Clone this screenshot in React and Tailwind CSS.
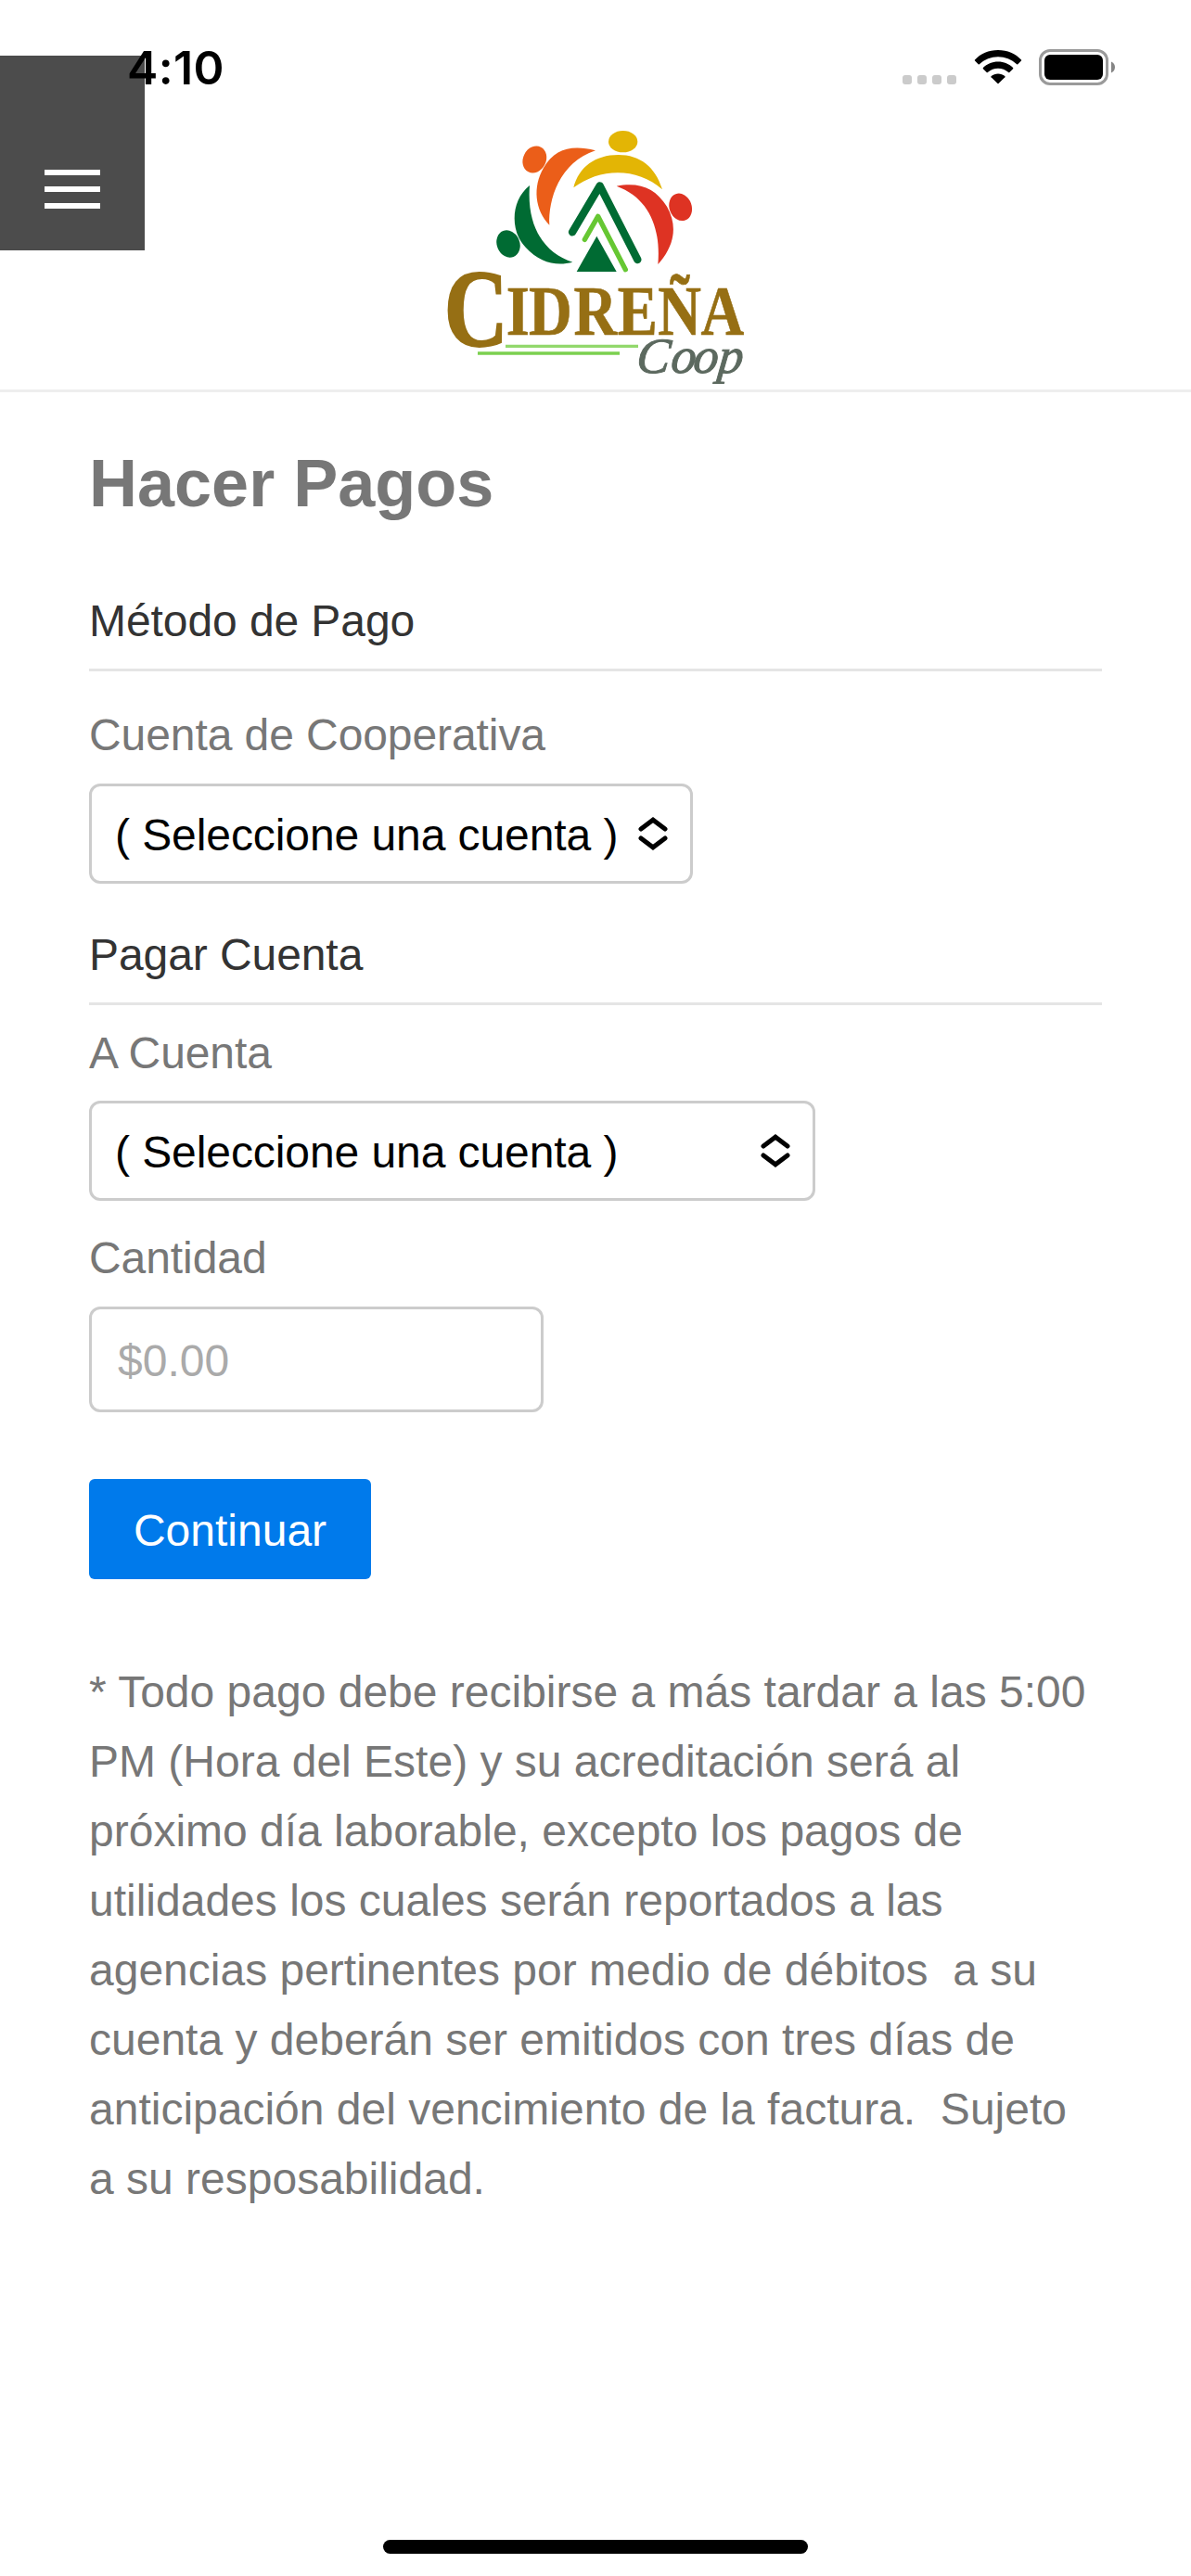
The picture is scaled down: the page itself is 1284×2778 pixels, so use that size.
import { useState } from "react";

function StatusBar() {
  return <div className="absolute inset-x-0 top-0 flex h-[141px] items-start justify-between pl-[137px] pr-[81px]">
      <span className="mt-[43px] font-['Inter'] text-[50px] leading-[60px] font-semibold tracking-[0.4px] text-black">4:10</span>
      <div className="mt-[53px] flex items-end">
        <div className="mb-px flex gap-1.5">
          {[0, 1, 2, 3].map((dot) => <span key={dot} className="h-2.5 w-2.5 rounded-[3px] bg-[#cbcbcb]" />)}
        </div>
        <svg className="mb-px ml-[19px] h-[38px] w-[52px]" viewBox="0 0 52 38">
          <path d="M26 1C36 1 45 5 51 11.5Q51.5 12 51 12.6L47.3 16.3Q46.8 16.8 46.2 16.3C40.5 11 33.5 8.3 26 8.3S11.5 11 5.8 16.3Q5.2 16.8 4.7 16.3L1 12.6Q.5 12 1 11.5C7 5 16 1 26 1Z" />
          <path d="M26 13.6C32.3 13.6 38 16 42.1 20.1Q42.6 20.7 42.1 21.3L38.3 25Q37.8 25.5 37.2 25C34 22.3 30.1 20.8 26 20.8S18 22.3 14.8 25Q14.2 25.5 13.7 25L9.9 21.3Q9.4 20.7 9.9 20.1C14 16 19.7 13.6 26 13.6Z" />
          <path d="M26 26.4C28.8 26.4 31.3 27.3 33.3 29Q33.9 29.6 33.4 30.2L26.5 37.1Q26 37.5 25.5 37.1L18.6 30.2Q18.1 29.6 18.7 29C20.7 27.3 23.2 26.4 26 26.4Z" />
        </svg>
        <svg className="ml-[18px] h-[39px] w-[83px]" viewBox="0 0 83 39">
          <rect x="1.5" y="1.5" width="72" height="36" rx="10.5" fill="none" stroke="#9a9a9a" strokeWidth="3" />
          <rect x="6" y="6" width="63" height="27" rx="6" />
          <path d="M78 13.5C80.4 14.5 82 16.8 82 19.5S80.4 24.5 78 25.5Z" fill="#858585" />
        </svg>
      </div>
    </div>;
}

function Logo() {
  return <svg className="h-[291px] w-[360px] overflow-visible" viewBox="0 0 1080 873">
      {
    /* People around the mountain */
  }
      <g fill="#006b33">
        <ellipse cx="264" cy="429" rx="37" ry="45" transform="rotate(-22 264 429)" />
        <path d="M333 240C270 290 270 390 320 440C365 490 420 502 472 488C390 462 322 385 333 240Z" />
        <path d="M550 404L614 519H485Z" />
      </g>
      <g fill="#eb5e19">
        <ellipse cx="349" cy="156" rx="37" ry="45" transform="rotate(27 349 156)" />
        <path d="M546 127C470 108 415 120 378 183C342 245 350 320 397 368C393 285 430 165 546 127Z" />
      </g>
      <g fill="#e3b505">
        <ellipse cx="635" cy="98" rx="47" ry="35" />
        <path d="M475 247C492 180 545 141 620 141C690 141 740 180 762 253C680 180 560 183 475 247Z" />
      </g>
      <g fill="#de3323">
        <ellipse cx="821" cy="310" rx="36" ry="45" transform="rotate(-20 821 310)" />
        <path d="M614 242C690 228 740 250 777 308C815 375 798 440 748 495C758 380 720 280 614 242Z" />
      </g>
      <path d="M471 391L560 241L682 480" fill="none" stroke="#006b33" strokeWidth="25" strokeLinecap="round" strokeLinejoin="round" />
      <path d="M511 415L554 340L643 512" fill="none" stroke="#66c733" strokeWidth="16" strokeLinecap="round" strokeLinejoin="round" />

      {
    /* Name */
  }
      <g fill="#966f14" stroke="#966f14" fontFamily="'Liberation Serif', serif" fontWeight="700">
        <text transform="translate(56 760) scale(.8 1)" fontSize="358" strokeWidth="6">C</text>
        <text transform="translate(0 722) scale(.84 1)" x="306 393 566 735 890 1055" fontSize="231" strokeWidth="2">IDREÑA</text>
      </g>
      <path d="M255 760H684" stroke="#92d86c" strokeWidth="10" />
      <path d="M165 783H624" stroke="#7bd04f" strokeWidth="10" />
      <g fill="#5c695f" stroke="#5c695f" strokeWidth="3" fontFamily="'Liberation Serif', serif" fontStyle="italic" fontSize="162">
        <text transform="translate(675 845) skewX(-6)" x="0 112 184 264">Coop</text>
      </g>
    </svg>;
}

function SectionTitle({ children }) {
  return <h2 className="h-[85px] border-b-[3px] border-[#e5e5e5] pt-px text-[48px] leading-[60px] tracking-[-0.08px] text-[#333]">{children}</h2>;
}

function AccountSelect({ className }) {
  return <button className={`flex h-[108px] items-center justify-between rounded-xl border-[3px] border-[#ccc] bg-white pr-6 pl-[25px] text-black ${className}`}>
      <span className="pt-[3px] text-[48px] leading-[60px] tracking-[-0.08px]">( Seleccione una cuenta )</span>
      <svg className="h-9 w-8" viewBox="0 0 32 36" fill="none" stroke="currentColor" strokeWidth="5" strokeLinecap="round" strokeLinejoin="miter">
        <path d="M3 13L16 3.2L29 13" />
        <path d="M3 23L16 32.8L29 23" />
      </svg>
    </button>;
}

export default function App() {
  const [amount, setAmount] = useState("");
  return <div className="relative flex h-[2778px] w-[1284px] flex-col overflow-hidden bg-white font-['Liberation_Sans',sans-serif]">
      <header className="flex h-[423px] items-start border-b-[3px] border-[#eee]">
        <button className="mt-[60px] flex h-[210px] w-[156px] flex-col items-center gap-3 bg-[#4c4c4c] pt-[123px]">
          <span className="h-1.5 w-[60px] bg-white" />
          <span className="h-1.5 w-[60px] bg-white" />
          <span className="h-1.5 w-[60px] bg-white" />
        </button>
        <div className="mt-[120px] ml-[304px]">
          <Logo />
        </div>
      </header>

      <main className="flex flex-col px-24 text-[48px] leading-[60px] text-[#777]">
        <h1 className="mt-[58px] text-[72px] leading-[80px] font-bold">Hacer Pagos</h1>

        <div className="mt-[78px]">
          <SectionTitle>Método de Pago</SectionTitle>
          <p className="mt-[39px] tracking-[-0.08px]">Cuenta de Cooperativa</p>
          <AccountSelect className="mt-[22px] w-[651px]" />
        </div>

        <div className="mt-[46px]">
          <SectionTitle>Pagar Cuenta</SectionTitle>
          <p className="mt-[22px] tracking-[-0.08px]">A Cuenta</p>
          <AccountSelect className="mt-[21px] w-[783px]" />
          <p className="mt-8 tracking-[-0.08px]">Cantidad</p>
          <input
            className="mt-[22px] block h-[114px] w-[490px] rounded-xl border-[3px] border-[#ccc] px-7 pt-0.5 placeholder:text-[#aaa]"
            placeholder="$0.00"
            value={amount}
            onChange={(e) => setAmount(e.target.value)}
          />
        </div>

        <button className="mt-[72px] h-[108px] w-[304px] rounded-md bg-[#007aeb] pt-[3px] text-white">Continuar</button>

        <p className="mt-[84px] leading-[75px]">
          * Todo pago debe recibirse a más tardar a las 5:00 PM (Hora del Este) y su acreditación será al próximo día laborable, excepto los pagos de utilidades los cuales serán reportados a las agencias pertinentes por medio de débitos&nbsp; a su cuenta y deberán ser emitidos con tres días de anticipación del vencimiento de la factura.&nbsp; Sujeto a su resposabilidad.
        </p>
      </main>

      <div className="mx-auto mt-auto mb-6 h-[15px] w-[458px] rounded-full bg-black" />
      <StatusBar />
    </div>;
}
